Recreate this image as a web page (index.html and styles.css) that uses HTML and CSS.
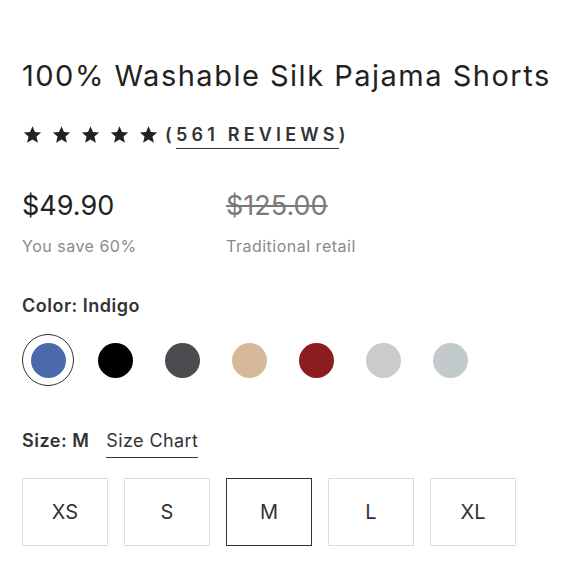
FILE: index.html
```html
<!DOCTYPE html>
<html>
<head>
<meta charset="utf-8">
<link rel="stylesheet" href="styles.css">
</head>
<body>
<div class="product">
  <h1 class="title">100% Washable Silk Pajama Shorts</h1>
  <div class="rating">
    <div class="stars">
      <svg class="star" viewBox="0 0 24 24"><path d="M12 1.5l3.1 7.2 7.8.7-5.9 5.2 1.8 7.7L12 18.2l-6.8 4.1 1.8-7.7-5.9-5.2 7.8-.7z"/></svg>
      <svg class="star" viewBox="0 0 24 24"><path d="M12 1.5l3.1 7.2 7.8.7-5.9 5.2 1.8 7.7L12 18.2l-6.8 4.1 1.8-7.7-5.9-5.2 7.8-.7z"/></svg>
      <svg class="star" viewBox="0 0 24 24"><path d="M12 1.5l3.1 7.2 7.8.7-5.9 5.2 1.8 7.7L12 18.2l-6.8 4.1 1.8-7.7-5.9-5.2 7.8-.7z"/></svg>
      <svg class="star" viewBox="0 0 24 24"><path d="M12 1.5l3.1 7.2 7.8.7-5.9 5.2 1.8 7.7L12 18.2l-6.8 4.1 1.8-7.7-5.9-5.2 7.8-.7z"/></svg>
      <svg class="star" viewBox="0 0 24 24"><path d="M12 1.5l3.1 7.2 7.8.7-5.9 5.2 1.8 7.7L12 18.2l-6.8 4.1 1.8-7.7-5.9-5.2 7.8-.7z"/></svg>
    </div>
    <span class="reviews">(<span class="reviews-link">561 REVIEWS</span>)</span>
  </div>
  <div class="prices">
    <div class="price-col">
      <div class="price">$49.90</div>
      <div class="price-note">You save 60%</div>
    </div>
    <div class="price-col">
      <div class="price old">$125.00</div>
      <div class="price-note">Traditional retail</div>
    </div>
  </div>
  <div class="label">Color: Indigo</div>
  <div class="swatches">
    <span class="swatch selected"><span class="dot" style="background:#4a6aab"></span></span>
    <span class="swatch"><span class="dot" style="background:#000000"></span></span>
    <span class="swatch"><span class="dot" style="background:#4b4b50"></span></span>
    <span class="swatch"><span class="dot" style="background:#d6b999"></span></span>
    <span class="swatch"><span class="dot" style="background:#8b1c1f"></span></span>
    <span class="swatch"><span class="dot" style="background:#cbcbcb"></span></span>
    <span class="swatch"><span class="dot" style="background:#c2cacc"></span></span>
  </div>
  <div class="size-row">
    <span class="label inline">Size: M</span>
    <span class="size-chart">Size Chart</span>
  </div>
  <div class="sizes">
    <div class="size">XS</div>
    <div class="size">S</div>
    <div class="size active">M</div>
    <div class="size">L</div>
    <div class="size">XL</div>
  </div>
</div>
</body>
</html>
```

FILE: styles.css
```css
html, body {
  margin: 0;
  padding: 0;
  background: #ffffff;
}
body {
  font-family: Inter, "Liberation Sans", sans-serif;
  color: #222222;
}
.product {
  padding: 58px 0 0 22px;
}
.title {
  margin: 0;
  font-size: 29px;
  font-weight: 400;
  line-height: 36px;
  letter-spacing: 1.5px;
  color: #222;
}
.rating {
  display: flex;
  align-items: center;
  margin-top: 28px;
  height: 24px;
}
.stars {
  display: flex;
  gap: 10px;
  margin-left: 1px;
}
.star {
  width: 19px;
  height: 19px;
  fill: #222;
}
.reviews {
  margin-left: 7px;
  font-size: 18px;
  font-weight: 600;
  letter-spacing: 4.2px;
  color: #333;
}
.reviews-link {
  padding-bottom: 3px;
  border-bottom: 1.5px solid #333;
}
.prices {
  display: flex;
  margin-top: 44px;
}
.price-col {
  width: 204px;
}
.price {
  font-size: 27px;
  line-height: 32px;
  color: #222;
  letter-spacing: 0;
}
.price.old {
  color: #7a7a7a;
  text-decoration: line-through;
  text-decoration-thickness: 1.5px;
}
.price-note {
  margin-top: 14px;
  font-size: 16px;
  color: #8a8a8a;
  letter-spacing: 0.5px;
}
.label {
  margin-top: 39px;
  font-size: 18px;
  font-weight: 600;
  color: #333;
  letter-spacing: 0.5px;
}
.label.inline {
  margin-top: 0;
}
.swatches {
  display: flex;
  gap: 15px;
  margin-top: 18px;
}
.swatch {
  width: 52px;
  height: 52px;
  border-radius: 50%;
  display: flex;
  align-items: center;
  justify-content: center;
  box-sizing: border-box;
}
.swatch.selected {
  border: 1.5px solid #333;
}
.dot {
  width: 35px;
  height: 35px;
  border-radius: 50%;
}
.size-row {
  display: flex;
  align-items: baseline;
  gap: 17px;
  margin-top: 44px;
}
.size-chart {
  font-size: 18px;
  color: #333;
  letter-spacing: 0.4px;
  padding-bottom: 6px;
  border-bottom: 1.5px solid #333;
}
.sizes {
  display: flex;
  gap: 16px;
  margin-top: 20px;
}
.size {
  width: 86px;
  height: 68px;
  box-sizing: border-box;
  border: 1.5px solid #dcdcdc;
  display: flex;
  align-items: center;
  justify-content: center;
  font-size: 20px;
  color: #333;
}
.size.active {
  border-color: #333;
}
```
